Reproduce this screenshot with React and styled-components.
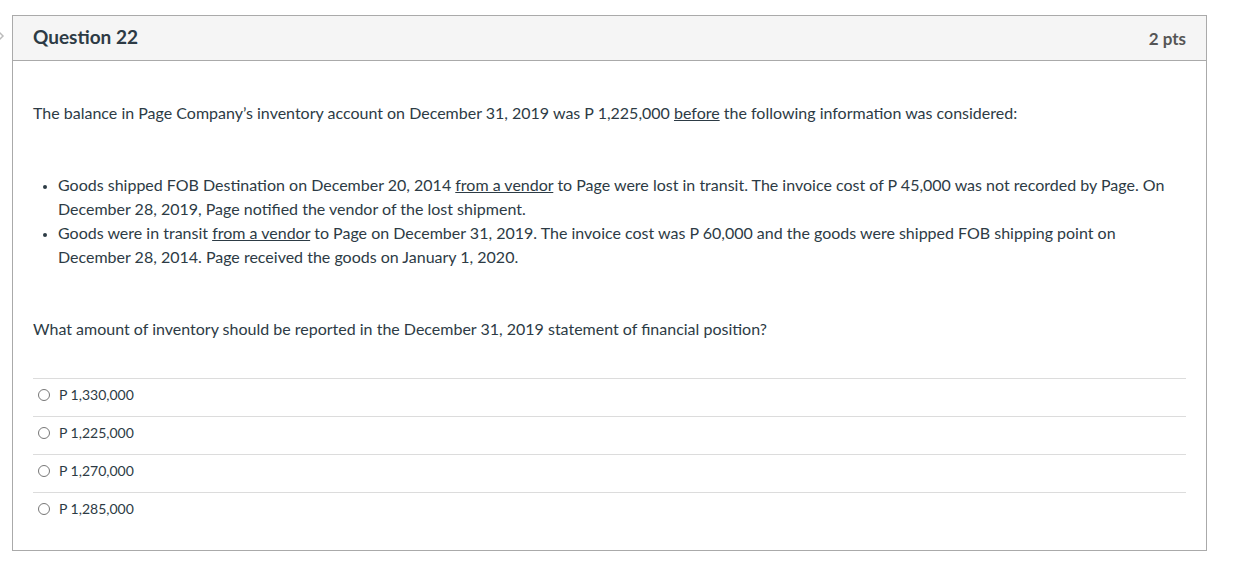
import React from "react"
import styled, { createGlobalStyle } from "styled-components"

const GlobalStyle = createGlobalStyle`
  body {
    margin: 0;
    background: #fff;
    font-family: Lato, "Open Sans", sans-serif;
    color: #2d3b45;
  }
`

const Page = styled.div`
  position: relative;
  padding: 15px 0 0 12px;
`

const Chevron = styled.svg`
  position: absolute;
  left: -3px;
  top: 30px;
`

const QuestionBox = styled.div`
  width: 1193px;
  border: 1px solid #aaaaaa;
  background: #fff;
`

const Header = styled.div`
  display: flex;
  align-items: center;
  justify-content: space-between;
  height: 44px;
  padding: 0 20px;
  background: #f5f5f5;
  border-bottom: 1px solid #aaaaaa;
`

const Title = styled.h2`
  margin: 0 0 4px;
  font-size: 19px;
  font-weight: 700;
  color: #2d3b45;
`

const Points = styled.div`
  font-size: 17px;
  font-weight: 700;
  color: #555;
`

const Body = styled.div`
  padding: 40px 20px 20px;
  font-size: 16px;
  line-height: 24px;
`

const Para = styled.p`
  margin: 0 0 ${(p) => p.$after || 0}px;
`

const Under = styled.span`
  text-decoration: underline;
`

const List = styled.ul`
  margin: 0 0 48px;
  padding-left: 25px;
  padding-right: 20px;
  li::marker {
    font-size: 12px;
  }
`

const Answers = styled.div`
  margin-top: 37px;
`

const AnswerRow = styled.div`
  display: flex;
  align-items: center;
  gap: 9px;
  box-sizing: border-box;
  height: 38px;
  padding: 0 0 6px 5px;
  border-top: 1px solid #dcdcdc;
  font-size: 14px;
`

const Radio = styled.span`
  width: 10px;
  height: 10px;
  border: 1px solid #777;
  border-radius: 50%;
  flex-shrink: 0;
`

const answers = ["P 1,330,000", "P 1,225,000", "P 1,270,000", "P 1,285,000"]

export default function App() {
  return (
    <Page>
      <GlobalStyle />
      <Chevron width="8" height="12" viewBox="0 0 8 12">
        <path d="M1 1 L6 6 L1 11" fill="none" stroke="#bbb" strokeWidth="1.5" />
      </Chevron>
      <QuestionBox>
        <Header>
          <Title>Question 22</Title>
          <Points>2 pts</Points>
        </Header>
        <Body>
          <Para $after={48}>
            The balance in Page Company’s inventory account on December 31, 2019 was P 1,225,000{" "}
            <Under>before</Under> the following information was considered:
          </Para>
          <List>
            <li>
              Goods shipped FOB Destination on December 20, 2014 <Under>from a vendor</Under> to Page
              were lost in transit. The invoice cost of P 45,000 was not recorded by Page. On
              December 28, 2019, Page notified the vendor of the lost shipment.
            </li>
            <li>
              Goods were in transit <Under>from a vendor</Under> to Page on December 31, 2019. The
              invoice cost was P 60,000 and the goods were shipped FOB shipping point on December 28,
              2014. Page received the goods on January 1, 2020.
            </li>
          </List>
          <Para>
            What amount of inventory should be reported in the December 31, 2019 statement of
            financial position?
          </Para>
          <Answers>
            {answers.map((a) => (
              <AnswerRow key={a}>
                <Radio />
                {a}
              </AnswerRow>
            ))}
          </Answers>
        </Body>
      </QuestionBox>
    </Page>
  )
}
